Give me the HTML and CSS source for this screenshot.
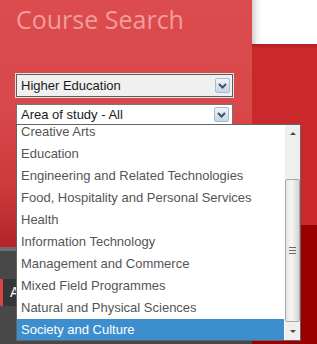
FILE: index.html
```html
<!DOCTYPE html>
<html lang="en">
<head>
    <meta charset="UTF-8">
    <meta name="viewport" content="width=device-width, initial-scale=1.0">
    <title>Course Search</title>
    <link rel="stylesheet" href="styles.css">
</head>
<body>
    <div class="page">
        <div class="left">
            <div class="panel">
                <h1 class="title">Course Search</h1>
                <div class="select level">
                    <span>Higher Education</span>
                    <span class="arrow"><svg width="15" height="15" viewBox="0 0 15 15"><polyline points="4,6 7.5,9.5 11,6" fill="none" stroke="#44505e" stroke-width="2"/></svg></span>
                </div>
                <div class="select area">
                    <span>Area of study - All</span>
                    <span class="arrow"><svg width="15" height="15" viewBox="0 0 15 15"><polyline points="4,6 7.5,9.5 11,6" fill="none" stroke="#44505e" stroke-width="2"/></svg></span>
                    <div class="list">
                        <ul class="options">
                            <li>Creative Arts</li>
                            <li>Education</li>
                            <li>Engineering and Related Technologies</li>
                            <li>Food, Hospitality and Personal Services</li>
                            <li>Health</li>
                            <li>Information Technology</li>
                            <li>Management and Commerce</li>
                            <li>Mixed Field Programmes</li>
                            <li>Natural and Physical Sciences</li>
                            <li class="selected">Society and Culture</li>
                        </ul>
                        <div class="scrollbar">
                            <span class="btn up"></span>
                            <span class="thumb"><span class="grip"></span></span>
                            <span class="btn down"></span>
                        </div>
                    </div>
                </div>
            </div>
            <div class="nav">
                <div class="tab">A</div>
            </div>
        </div>
        <div class="aside">
            <div class="aside-top"></div>
            <div class="aside-bottom"></div>
        </div>
    </div>
</body>
</html>
```

FILE: styles.css
```css
body{
    margin: 0;
    font-family: "Liberation Sans", Arial, sans-serif;
}
.page{
    display: flex;
    width: 317px;
    height: 344px;
    overflow: hidden;
}
.left{
    width: 252px;
    display: flex;
    flex-direction: column;
}
.panel{
    height: 247px;
    box-sizing: border-box;
    padding-top: 2px;
    background: linear-gradient(to bottom, #dc4b4d 0, #d84749 45%, #cc3a3c 75%, #b42426 100%);
}
.title{
    margin: 0 0 37px 16px;
    font: 400 25px/34px "Open Sans", sans-serif;
    color: #f39c9c;
}
.select{
    position: relative;
    display: flex;
    align-items: center;
    box-sizing: border-box;
    font-size: 13px;
    color: #1a1a1a;
}
.select .arrow{
    margin-left: auto;
    width: 15px;
    height: 15px;
    box-sizing: border-box;
    border: 1px solid #a7bbd3;
    border-radius: 2px;
    background: linear-gradient(to bottom, #f2f6fb, #d9e4f2 50%, #c6d6ea);
    display: flex;
}
.select .arrow svg{
    margin: -1px;
}
.level{
    margin-left: 15px;
    width: 219px;
    height: 25px;
    border: 1px solid #e2e2e2;
    box-shadow: inset 0 0 0 1px #5e5e5e;
    background: #f0f0f0;
    padding: 0 3px 0 5px;
}
.area{
    margin: 6px 0 0 16px;
    width: 217px;
    height: 21px;
    border: 1px solid #767676;
    background: #fff;
    padding: 0 3px 0 4px;
}
.list{
    position: absolute;
    left: -1px;
    top: 19px;
    width: 285px;
    height: 217px;
    box-sizing: border-box;
    border: 1px solid #646464;
    background: #fff;
    display: flex;
    overflow: hidden;
    z-index: 2;
}
.options{
    list-style: none;
    margin: -4px 0 0;
    padding: 0;
    flex: 1;
    color: #555;
}
.options li{
    height: 22px;
    line-height: 22px;
    padding-left: 4px;
    white-space: nowrap;
}
.options .selected{
    background: #3d8ecd;
    color: #fff;
}
.scrollbar{
    width: 16px;
    display: flex;
    flex-direction: column;
    background: #efefef;
    border-left: 1px solid #fbfbfb;
    box-sizing: border-box;
}
.btn{
    height: 17px;
    display: flex;
    align-items: center;
    justify-content: center;
}
.btn::before{
    content: "";
    border-left: 3px solid transparent;
    border-right: 3px solid transparent;
}
.up::before{
    border-bottom: 3px solid #4a4a4a;
}
.down{
    margin-top: auto;
}
.down::before{
    border-top: 3px solid #4a4a4a;
}
.thumb{
    margin: 37px 0 0;
    height: 143px;
    box-sizing: border-box;
    border: 1px solid #a9a9a9;
    border-radius: 2px;
    background: linear-gradient(to right, #e4e4e4, #f6f6f6 40%, #d6d6d6);
    display: flex;
    align-items: center;
    justify-content: center;
}
.grip{
    width: 7px;
    height: 5px;
    border-top: 1px solid #6a6a6a;
    border-bottom: 1px solid #6a6a6a;
    background: linear-gradient(to bottom, transparent 2px, #6a6a6a 2px, #6a6a6a 3px, transparent 3px);
}
.nav{
    flex: 1;
    background: #484848;
    border-top: 4px solid #6e6e6e;
}
.tab{
    margin-top: 28px;
    width: 60px;
    height: 27px;
    box-sizing: border-box;
    border-left: 3px solid #d94446;
    background: #363636;
    color: #fff;
    font-size: 14px;
    line-height: 27px;
    padding-left: 7px;
}
.aside{
    flex: 1;
    display: flex;
    flex-direction: column;
}
.aside-top{
    height: 44px;
    background: linear-gradient(to right, #cfcfcf, #f2f2f2 5px, #fff 10px);
}
.aside-bottom{
    flex: 1;
    background: linear-gradient(to bottom, #b21e1e, #c9292a 5px, #c9292a 181px, #9b0000 181px);
}
```
